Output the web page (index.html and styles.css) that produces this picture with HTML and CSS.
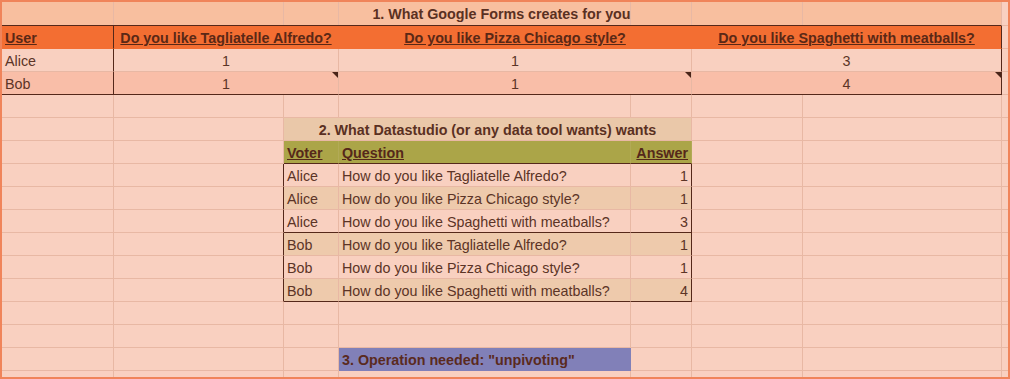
FILE: index.html
```html
<!DOCTYPE html>
<html>
<head>
<meta charset="utf-8">
<link rel="stylesheet" href="styles.css">
</head>
<body>
<div class="frame">
  <div class="sheet">
    <!-- row 1 -->
    <div class="c title1 span7 center bold">1. What Google Forms creates for you</div>
    <div class="c"></div>
    <!-- row 2 -->
    <div class="c hdr dr bold ul">User</div>
    <div class="c hdr span2 center bold ul">Do you like Tagliatelle Alfredo?</div>
    <div class="c hdr span2 center bold ul">Do you like Pizza Chicago style?</div>
    <div class="c hdr span2 center bold ul dr">Do you like Spaghetti with meatballs?</div>
    <div class="c"></div>
    <!-- row 3 -->
    <div class="c dr">Alice</div>
    <div class="c span2 center">1</div>
    <div class="c span2 center">1</div>
    <div class="c span2 center dr">3</div>
    <div class="c"></div>
    <!-- row 4 -->
    <div class="c bob dr db">Bob</div>
    <div class="c bob span2 center db note">1</div>
    <div class="c bob span2 center db note">1</div>
    <div class="c bob span2 center dr db note">4</div>
    <div class="c"></div>
    <!-- row 5 -->
    <div class="c"></div><div class="c"></div><div class="c"></div><div class="c"></div>
    <div class="c"></div><div class="c"></div><div class="c"></div><div class="c"></div>
    <!-- row 6 -->
    <div class="c"></div><div class="c"></div>
    <div class="c tan span3 center bold">2. What Datastudio (or any data tool wants) wants</div>
    <div class="c"></div><div class="c"></div><div class="c"></div>
    <!-- row 7 -->
    <div class="c"></div><div class="c"></div>
    <div class="c olive db bold ul">Voter</div>
    <div class="c olive db bold ul">Question</div>
    <div class="c olive db bold ul right">Answer</div>
    <div class="c"></div><div class="c"></div><div class="c"></div>
    <!-- row 8 -->
    <div class="c"></div><div class="c dr"></div>
    <div class="c">Alice</div>
    <div class="c">How do you like Tagliatelle Alfredo?</div>
    <div class="c dr right">1</div>
    <div class="c"></div><div class="c"></div><div class="c"></div>
    <!-- row 9 -->
    <div class="c"></div><div class="c dr"></div>
    <div class="c tanrow">Alice</div>
    <div class="c tanrow">How do you like Pizza Chicago style?</div>
    <div class="c tanrow dr right">1</div>
    <div class="c"></div><div class="c"></div><div class="c"></div>
    <!-- row 10 -->
    <div class="c"></div><div class="c dr"></div>
    <div class="c db">Alice</div>
    <div class="c db">How do you like Spaghetti with meatballs?</div>
    <div class="c db dr right">3</div>
    <div class="c"></div><div class="c"></div><div class="c"></div>
    <!-- row 11 -->
    <div class="c"></div><div class="c dr"></div>
    <div class="c tanrow">Bob</div>
    <div class="c tanrow">How do you like Tagliatelle Alfredo?</div>
    <div class="c tanrow dr right">1</div>
    <div class="c"></div><div class="c"></div><div class="c"></div>
    <!-- row 12 -->
    <div class="c"></div><div class="c dr"></div>
    <div class="c">Bob</div>
    <div class="c">How do you like Pizza Chicago style?</div>
    <div class="c dr right">1</div>
    <div class="c"></div><div class="c"></div><div class="c"></div>
    <!-- row 13 -->
    <div class="c"></div><div class="c dr"></div>
    <div class="c tanrow db">Bob</div>
    <div class="c tanrow db">How do you like Spaghetti with meatballs?</div>
    <div class="c tanrow db dr right">4</div>
    <div class="c"></div><div class="c"></div><div class="c"></div>
    <!-- row 14 -->
    <div class="c"></div><div class="c"></div><div class="c"></div><div class="c"></div>
    <div class="c"></div><div class="c"></div><div class="c"></div><div class="c"></div>
    <!-- row 15 -->
    <div class="c"></div><div class="c"></div><div class="c"></div><div class="c"></div>
    <div class="c"></div><div class="c"></div><div class="c"></div><div class="c"></div>
    <!-- row 16 -->
    <div class="c"></div><div class="c"></div><div class="c"></div>
    <div class="c purple bold">3. Operation needed: "unpivoting"</div>
    <div class="c"></div><div class="c"></div><div class="c"></div><div class="c"></div>
    <!-- row 17 -->
    <div class="c"></div><div class="c"></div><div class="c"></div><div class="c"></div>
    <div class="c"></div><div class="c"></div><div class="c"></div><div class="c"></div>
  </div>
</div>
</body>
</html>
```

FILE: styles.css
```css
:root {
  --bg: #f9d0c0;
  --grid: #e8b8a4;
  --dark: #55281a;
  --text: #5c3426;
}

html, body {
  margin: 0;
  padding: 0;
  background: #f0845a;
}

.frame {
  width: 1010px;
  height: 379px;
  box-sizing: border-box;
  border: 2px solid #f0845a;
  overflow: hidden;
  background: var(--bg);
}

.sheet {
  display: grid;
  grid-template-columns: 112px 170px 55px 292px 61px 111px 199px 1fr;
  grid-template-rows: 24px;
  grid-auto-rows: 23px;
  font-family: "Liberation Sans", Arial, sans-serif;
  font-size: 14.3px;
  color: var(--text);
}

.c {
  box-sizing: border-box;
  background: var(--bg);
  border-right: 1px solid var(--grid);
  border-bottom: 1px solid var(--grid);
  display: flex;
  align-items: flex-end;
  padding: 0 3px 2px 3px;
  line-height: 16px;
  white-space: nowrap;
  overflow: hidden;
  position: relative;
}

.span2 { grid-column: span 2; }
.span3 { grid-column: span 3; }
.span7 { grid-column: span 7; }

.center { justify-content: center; }
.right { justify-content: flex-end; }
.bold { font-weight: bold; }
.ul { text-decoration: underline; }

.dr { border-right-color: var(--dark); }
.db { border-bottom-color: var(--dark); }

.title1 {
  background-color: #f8bf9f;
  background-image:
    linear-gradient(var(--grid), var(--grid)),
    linear-gradient(var(--grid), var(--grid)),
    linear-gradient(var(--grid), var(--grid)),
    linear-gradient(var(--grid), var(--grid)),
    linear-gradient(var(--grid), var(--grid)),
    linear-gradient(var(--grid), var(--grid));
  background-size: 1px 100%;
  background-repeat: no-repeat;
  background-position: 111px 0, 281px 0, 336px 0, 628px 0, 689px 0, 800px 0;
  border-bottom-color: var(--dark);
  padding-bottom: 3px;
  color: #5a3022;
}

.hdr {
  background: #f36e32;
  border-bottom-color: #f36e32;
  color: #5a2816;
}
.hdr:not(.dr) { border-right-color: #f36e32; }

.bob { background: #f9bea8; }

.note::after {
  content: "";
  position: absolute;
  top: 0;
  right: 0;
  width: 0;
  height: 0;
  border-top: 6px solid #4a2418;
  border-left: 6px solid transparent;
}

.tan {
  background: #eac8a9;
  color: #5a3022;
}

.tanrow { background: #eecaac; }

.olive {
  background: #aba548;
  border-right-color: #b2aa56;
  color: #55281a;
}

.purple {
  background: #8180b8;
  border-color: #8180b8;
  color: #5a2a1e;
}
```
